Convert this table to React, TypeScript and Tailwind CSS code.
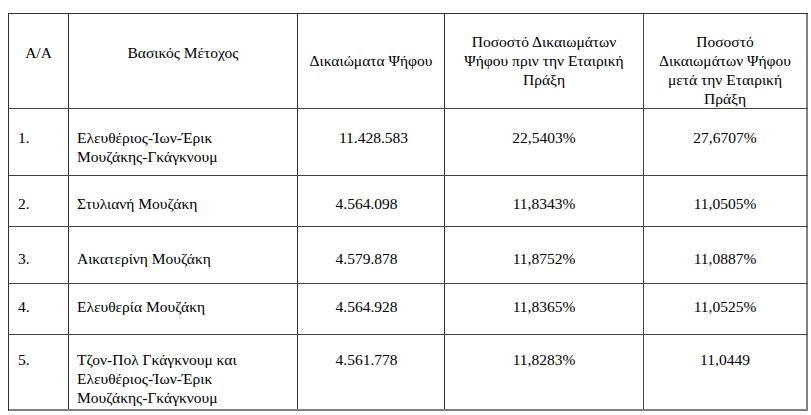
import React from "react";

type Row = {
  h: string;
  pt: string;
  aa: string;
  name: string[];
  votes: string;
  votesCls: string;
  before: string;
  after: string;
};

const rows: Row[] = [
  {
    h: "h-[67px]",
    pt: "pt-[19px]",
    aa: "1.",
    name: ["Ελευθέριος-Ίων-Έρικ", "Μουζάκης-Γκάγκνουμ"],
    votes: "11.428.583",
    votesCls: "pl-[5px]",
    before: "22,5403%",
    after: "27,6707%",
  },
  {
    h: "h-[51px]",
    pt: "pt-[18px]",
    aa: "2.",
    name: ["Στυλιανή Μουζάκη"],
    votes: "4.564.098",
    votesCls: "pr-[9px]",
    before: "11,8343%",
    after: "11,0505%",
  },
  {
    h: "h-[57px]",
    pt: "pt-[22px]",
    aa: "3.",
    name: ["Αικατερίνη Μουζάκη"],
    votes: "4.579.878",
    votesCls: "pr-[9px]",
    before: "11,8752%",
    after: "11,0887%",
  },
  {
    h: "h-[51px]",
    pt: "pt-[13px]",
    aa: "4.",
    name: ["Ελευθερία Μουζάκη"],
    votes: "4.564.928",
    votesCls: "pr-[9px]",
    before: "11,8365%",
    after: "11,0525%",
  },
  {
    h: "h-[76px]",
    pt: "pt-[15px]",
    aa: "5.",
    name: ["Τζον-Πολ Γκάγκνουμ και", "Ελευθέριος-Ίων-Έρικ", "Μουζάκης-Γκάγκνουμ"],
    votes: "4.561.778",
    votesCls: "pr-[9px]",
    before: "11,8283%",
    after: "11,0449",
  },
];

export default function App() {
  return (
    <div className="w-[811px] h-[415px] bg-white overflow-hidden pt-[13px] pl-[8px] text-black font-serif text-[15.5px] leading-[19px] whitespace-nowrap">
      <div className="w-[800px] border-l border-t border-[#333] flex flex-col font-['Liberation_Serif']">
        <div className="flex h-[95px] border-b border-[#444]">
          <div className="w-[60px] border-r border-[#333] text-center pt-[29px] font-['Liberation_Serif']">A/A</div>
          <div className="w-[229px] border-r border-[#333] text-center pt-[29px] font-['Liberation_Serif']">Βασικός Μέτοχος</div>
          <div className="w-[147px] border-r border-[#333] text-center pt-[37px] font-['Liberation_Serif']">Δικαιώματα Ψήφου</div>
          <div className="w-[199px] border-r border-[#444] text-center pt-[18px] flex flex-col font-['Liberation_Serif']">
            <span>Ποσοστό Δικαιωμάτων</span>
            <span>Ψήφου πριν την Εταιρική</span>
            <span>Πράξη</span>
          </div>
          <div className="w-[164px] border-r-2 border-[#808080] text-center pt-[18px] flex flex-col overflow-hidden font-['Liberation_Serif']">
            <span>Ποσοστό</span>
            <span>Δικαιωμάτων Ψήφου</span>
            <span>μετά την Εταιρική</span>
            <span>Πράξη</span>
          </div>
        </div>
        {rows.map((r, i) => (
          <div
            key={r.aa}
            className={`flex ${r.h} overflow-hidden font-['Liberation_Serif'] ${i === rows.length - 1 ? "border-b-2 border-[#808080]" : "border-b border-[#444]"}`}
          >
            <div className={`w-[60px] border-r border-[#333] pl-[9px] ${r.pt}`}>{r.aa}</div>
            <div className={`w-[229px] border-r border-[#333] pl-[8px] ${r.pt}`}>
              {r.name.map((n) => (
                <div key={n}>{n}</div>
              ))}
            </div>
            <div className={`w-[147px] border-r border-[#333] text-center ${r.pt} ${r.votesCls}`}>{r.votes}</div>
            <div className={`w-[199px] border-r border-[#444] text-center ${r.pt}`}>{r.before}</div>
            <div className={`w-[164px] border-r-2 border-[#808080] text-center ${r.pt}`}>{r.after}</div>
          </div>
        ))}
      </div>
    </div>
  );
}
